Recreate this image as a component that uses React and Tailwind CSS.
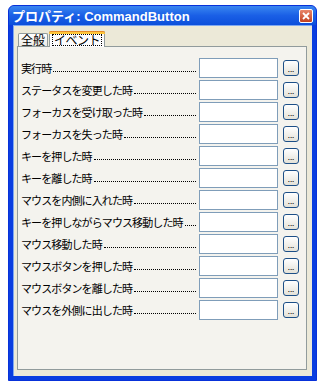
const rows = [
  '実行時',
  'ステータスを変更した時',
  'フォーカスを受け取った時',
  'フォーカスを失った時',
  'キーを押した時',
  'キーを離した時',
  'マウスを内側に入れた時',
  'キーを押しながらマウス移動した時',
  'マウス移動した時',
  'マウスボタンを押した時',
  'マウスボタンを離した時',
  'マウスを外側に出した時',
]

const font = { fontFamily: '"Noto Sans CJK JP", "Liberation Sans", sans-serif' }

function EventRow({ label }) {
  return (
    <div className="flex items-center h-[20px]">
      <div className="flex-1 flex items-end h-full pb-[3px] pr-[3px] min-w-0 overflow-hidden">
        <span className="text-[11px] leading-[14px] text-black whitespace-nowrap tracking-[-0.9px]">{label}</span>
        <div className="flex-1 min-w-[10px] border-b border-dotted border-black mb-[3px] ml-[2px]" />
      </div>
      <div className="w-[79px] h-[20px] bg-white border border-[#7f9db9]" />
      <button className="ml-[5px] w-[16px] h-[16px] rounded-[3px] border border-[#1c4f87] bg-gradient-to-b from-white to-[#e4e2d8] flex items-center justify-center">
        <span className="text-[8px] leading-none text-black mt-[2px]">...</span>
      </button>
    </div>
  )
}

export default function App() {
  return (
    <div className="w-[325px] h-[388px] bg-white pt-[5px] pl-[8px]" style={font}>
      <div className="w-[309px] h-[376px] flex flex-col rounded-t-[6px] bg-[#0a3ee0] px-[4px] pb-[4px] border border-[#0831d9]">
        {/* title bar */}
        <div className="h-[19px] -mx-[4px] px-[4px] flex items-center justify-between rounded-t-[5px] bg-gradient-to-b from-[#3a86f0] via-[#1a5fe6] to-[#0c4fdb]">
          <span className="text-white font-bold text-[13px] leading-none ml-[-1px] mt-[1px]" style={{ fontFamily: '"Liberation Sans", "Noto Sans CJK JP", sans-serif' }}>
            プロパティ: CommandButton
          </span>
          <div className="w-[14px] h-[14px] rounded-[2px] border border-white bg-gradient-to-b from-[#e8856a] to-[#c2401e] flex items-center justify-center mr-[-1px]">
            <svg width="8" height="8" viewBox="0 0 8 8">
              <path d="M1 1L7 7M7 1L1 7" stroke="white" strokeWidth="1.8" />
            </svg>
          </div>
        </div>
        {/* client */}
        <div className="flex-1 bg-[#ece9d8] border-l border-t border-[#7fa8f0] pt-[4px] pl-[3px] pr-[5px] pb-[6px] flex flex-col">
          <div className="flex items-end h-[16px] pl-[1px] relative z-10">
            <div className="h-[13px] px-[2px] border border-b-0 border-[#919b9c] rounded-t-[2px] bg-gradient-to-b from-white to-[#ecebe6] text-[12px] leading-[12px] text-black">
              全般
            </div>
            <div className="h-[16px] -mb-[1px] ml-[1px] border-x border-[#919b9c] rounded-t-[2px] bg-[#fcfcfe] flex flex-col">
              <div className="h-[3px] bg-[#ffc73c] border-t border-[#e68b2c] rounded-t-[2px] -mx-[1px]" />
              <div className="mx-[2px] px-[1px] border border-dotted border-black text-[12px] leading-[10px] text-black h-[12px] tracking-[-0.5px]">
                イベント
              </div>
            </div>
          </div>
          <div className="flex-1 border border-[#919b9c] bg-[#f4f3ee] pt-[11px] pl-[3px] pr-[7px] flex flex-col gap-[2px]">
            {rows.map((r) => (
              <EventRow key={r} label={r} />
            ))}
          </div>
        </div>
      </div>
    </div>
  )
}
